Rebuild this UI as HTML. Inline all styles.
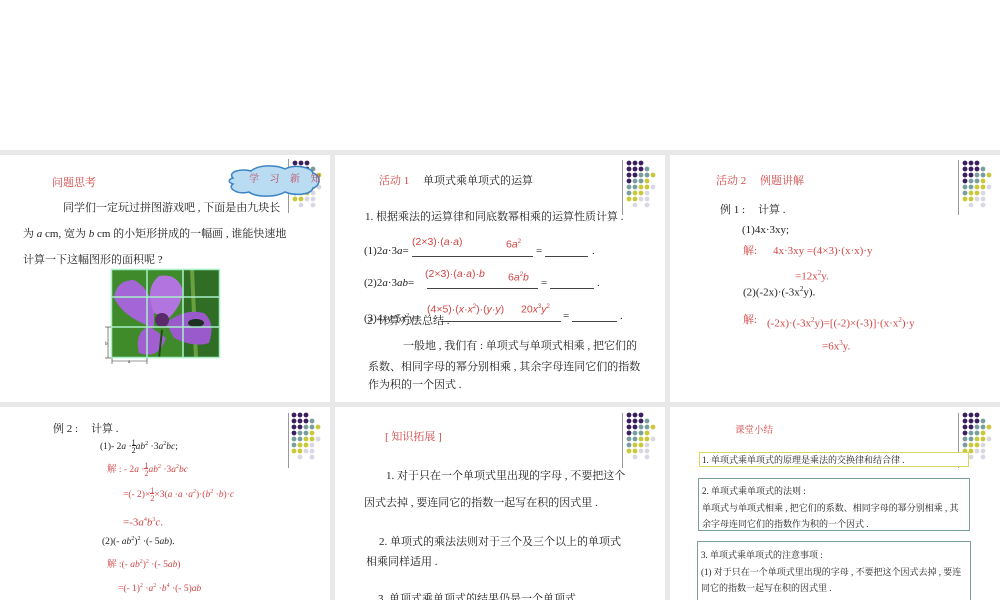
<!DOCTYPE html>
<html><head><meta charset="utf-8"><style>
html,body{margin:0;width:1000px;height:600px;overflow:hidden}
body{background:#fff;font-family:"Liberation Serif","Noto Serif CJK SC",serif;color:#222}
#w{position:relative;width:1000px;height:600px;overflow:hidden}
.bg{position:absolute;left:0;top:150px;width:1000px;height:450px;background:#e8e8e8}
.s{position:absolute;background:#fff}
.t{position:absolute;white-space:nowrap;font-size:11px;line-height:14px;transform:translateY(-7px)}
.r{color:#d24646}
.sm{font-size:9.5px}
.f{font-family:"Liberation Sans","Noto Sans CJK SC",sans-serif;font-size:10.5px}
.vl{position:absolute;width:1px;background:#999}
.ul{position:absolute;height:1px;background:#444}
.bx{position:absolute;border:1.5px solid #7a9ea0;background:#fff}
.b8{font-size:9px}
</style></head><body><div id="w">
<div class="bg"></div>
<div class="s" style="left:0;top:155px;width:330px;height:247px"></div>
<div class="s" style="left:335px;top:155px;width:330px;height:247px"></div>
<div class="s" style="left:670px;top:155px;width:330px;height:247px"></div>
<div class="s" style="left:0;top:407px;width:330px;height:193px"></div>
<div class="s" style="left:335px;top:407px;width:330px;height:193px"></div>
<div class="s" style="left:670px;top:407px;width:330px;height:193px"></div>

<svg width="0" height="0" style="position:absolute"><defs>
<g id="dots">
<g fill="#3b1f5e"><circle cx="0" cy="0" r="2.4"/><circle cx="6" cy="0" r="2.4"/><circle cx="12" cy="0" r="2.4"/>
<circle cx="0" cy="6" r="2.4"/><circle cx="6" cy="6" r="2.4"/><circle cx="12" cy="6" r="2.4"/>
<circle cx="0" cy="12" r="2.4"/><circle cx="6" cy="12" r="2.4"/><circle cx="0" cy="18" r="2.4"/></g>
<g fill="#7a9e9e"><circle cx="18" cy="6" r="2.4"/><circle cx="12" cy="12" r="2.4"/><circle cx="18" cy="12" r="2.4"/><circle cx="6" cy="18" r="2.4"/><circle cx="12" cy="18" r="2.4"/><circle cx="0" cy="24" r="2.4"/><circle cx="6" cy="24" r="2.4"/><circle cx="0" cy="30" r="2.4"/></g>
<g fill="#c8c83a"><circle cx="24" cy="12" r="2.4"/><circle cx="18" cy="18" r="2.4"/><circle cx="12" cy="24" r="2.4"/><circle cx="18" cy="24" r="2.4"/><circle cx="6" cy="30" r="2.4"/><circle cx="12" cy="30" r="2.4"/><circle cx="0" cy="36" r="2.4"/><circle cx="6" cy="36" r="2.4"/></g>
<g fill="#d8d8e4"><circle cx="24" cy="24" r="2.4"/><circle cx="18" cy="30" r="2.4"/><circle cx="12" cy="36" r="2.4"/><circle cx="18" cy="36" r="2.4"/><circle cx="6" cy="42" r="2.4"/><circle cx="18" cy="42" r="2.4"/></g>
</g></defs></svg>

<div class="vl" style="left:288px;top:159px;height:54px"></div>
<svg style="position:absolute;left:292px;top:160px" width="32" height="50"><use href="#dots" x="3" y="3"/></svg>
<div class="vl" style="left:622px;top:160px;height:55px"></div>
<svg style="position:absolute;left:626px;top:160px" width="32" height="50"><use href="#dots" x="3" y="3"/></svg>
<div class="vl" style="left:958px;top:160px;height:55px"></div>
<svg style="position:absolute;left:962px;top:160px" width="32" height="50"><use href="#dots" x="3" y="3"/></svg>
<div class="vl" style="left:288px;top:413px;height:55px"></div>
<svg style="position:absolute;left:291px;top:412px" width="32" height="50"><use href="#dots" x="3" y="3"/></svg>
<div class="vl" style="left:622px;top:413px;height:55px"></div>
<svg style="position:absolute;left:626px;top:412px" width="32" height="50"><use href="#dots" x="3" y="3"/></svg>
<div class="vl" style="left:958px;top:413px;height:55px"></div>
<svg style="position:absolute;left:962px;top:412px" width="32" height="50"><use href="#dots" x="3" y="3"/></svg>

<!-- slide 1 -->
<svg style="position:absolute;left:225px;top:162px" width="96" height="38">
<path d="M8 16 C2 10 16 6 26 9 C34 2 52 3 60 7 C70 2 86 5 88 11 C96 13 96 24 88 26 C86 33 70 34 60 30 C50 36 30 35 24 30 C12 33 2 26 8 22 C2 20 4 17 8 16Z" fill="#b9dcf2" stroke="#3b84c4" stroke-width="1.5"/>
</svg>
<div class="t" style="left:249px;top:180px;color:#c04860;font-size:10px;letter-spacing:4px">学 习 新 知</div>
<div class="t r" style="left:52px;top:183px">问题思考</div>
<div class="t" style="left:63px;top:208px">同学们一定玩过拼图游戏吧 , 下面是由九块长</div>
<div class="t" style="left:23px;top:234px">为 <i>a</i> cm, 宽为 <i>b</i> cm 的小矩形拼成的一幅画 , 谁能快速地</div>
<div class="t" style="left:23px;top:260px">计算一下这幅图形的面积呢 ?</div>
<svg style="position:absolute;left:104px;top:268px" width="118" height="96">
<rect x="7" y="1" width="109" height="89" fill="#3f8a2a"/>
<rect x="80" y="1" width="36" height="89" fill="#2f6e24"/>
<path d="M86 1 L90 90 L94 90 L90 1Z" fill="#6aa040"/>
<path d="M50 60 Q20 50 10 30 Q12 12 30 12 Q45 20 50 40Z" fill="#a465d6"/>
<path d="M50 45 Q40 20 55 8 Q72 5 78 20 Q80 35 65 50Z" fill="#b275e0"/>
<path d="M62 55 Q80 40 100 45 Q112 55 105 75 Q90 80 70 70Z" fill="#9a5acc"/>
<path d="M45 58 Q30 65 35 85 Q55 92 62 70Z" fill="#a060d0"/>
<circle cx="58" cy="52" r="7" fill="#5a2a6a"/>
<ellipse cx="92" cy="55" rx="8" ry="4" fill="#1e3020"/>
<path d="M58 62 L55 90" stroke="#234a1a" stroke-width="2"/>
<g stroke="#a8f0c8" stroke-width="1.5" fill="none"><rect x="7.5" y="1.5" width="108" height="88"/><line x1="43" y1="1" x2="43" y2="90"/><line x1="79" y1="1" x2="79" y2="90"/><line x1="7" y1="29" x2="116" y2="29"/><line x1="7" y1="59" x2="116" y2="59"/></g>
<g stroke="#333" stroke-width="0.6"><line x1="4" y1="59" x2="4" y2="90"/><line x1="1" y1="59" x2="7" y2="59"/><line x1="1" y1="90" x2="7" y2="90"/><line x1="8" y1="93" x2="43" y2="93"/><line x1="8" y1="90" x2="8" y2="96"/><line x1="43" y1="90" x2="43" y2="96"/></g>
<text x="1" y="77" font-size="5" fill="#333">b</text><text x="24" y="95" font-size="5" fill="#333">a</text>
</svg>

<!-- slide 2 -->
<div class="t r" style="left:379px;top:181px">活动 1</div>
<div class="t" style="left:423px;top:181px">单项式乘单项式的运算</div>
<div class="t" style="left:365px;top:217px">1. 根据乘法的运算律和同底数幂相乘的运算性质计算 .</div>
<div class="t r f" style="left:412px;top:242px">(2×3)·(<i>a</i>·<i>a</i>)</div>
<div class="t r f" style="left:506px;top:242px">6<i>a</i><sup style="font-size:6px">2</sup></div>
<div class="t" style="left:364px;top:251px">(1)2<i>a</i>·3<i>a</i>=</div>
<div class="ul" style="left:412px;top:256px;width:121px"></div>
<div class="t" style="left:536px;top:251px">=</div>
<div class="ul" style="left:545px;top:256px;width:43px"></div>
<div class="t" style="left:592px;top:251px">.</div>
<div class="t r f" style="left:425px;top:274px">(2×3)·(<i>a</i>·<i>a</i>)·<i>b</i></div>
<div class="t r f" style="left:508px;top:275px">6<i>a</i><sup style="font-size:6px">2</sup><i>b</i></div>
<div class="t" style="left:364px;top:283px">(2)2<i>a</i>·3<i>ab</i>=</div>
<div class="ul" style="left:427px;top:288px;width:111px"></div>
<div class="t" style="left:541px;top:283px">=</div>
<div class="ul" style="left:550px;top:288px;width:44px"></div>
<div class="t" style="left:597px;top:283px">.</div>
<div class="t r f" style="left:427px;top:307px">(4×5)·(<i>x</i>·<i>x</i><sup style="font-size:6px">2</sup>)·(<i>y</i>·<i>y</i>)</div>
<div class="t r f" style="left:521px;top:307px">20<i>x</i><sup style="font-size:6px">3</sup><i>y</i><sup style="font-size:6px">2</sup></div>
<div class="t" style="left:364px;top:316px">(3)4<i>xy</i>·5<i>x</i><sup style="font-size:6px">2</sup><i>y</i>=</div>
<div class="ul" style="left:441px;top:321px;width:120px"></div>
<div class="t" style="left:563px;top:316px">=</div>
<div class="ul" style="left:572px;top:321px;width:45px"></div>
<div class="t" style="left:620px;top:316px">.</div>
<div class="t" style="left:367px;top:321px">2. 计算方法总结 .</div>
<div class="t" style="left:403px;top:346px">一般地 , 我们有 : 单项式与单项式相乘 , 把它们的</div>
<div class="t" style="left:368px;top:367px">系数、相同字母的幂分别相乘 , 其余字母连同它们的指数</div>
<div class="t" style="left:368px;top:385px">作为积的一个因式 .</div>

<!-- slide 3 -->
<div class="t r" style="left:716px;top:181px">活动 2</div>
<div class="t r" style="left:760px;top:181px">例题讲解</div>
<div class="t" style="left:720px;top:210px">例 1 :</div>
<div class="t" style="left:758px;top:210px">计算 .</div>
<div class="t" style="left:742px;top:230px">(1)4x·3xy;</div>
<div class="t r" style="left:743px;top:251px">解:</div>
<div class="t r" style="left:773px;top:251px">4x·3xy =(4×3)·(x·x)·y</div>
<div class="t r" style="left:795px;top:273px">=12x<sup style="font-size:7px">2</sup>y.</div>
<div class="t" style="left:743px;top:289px">(2)(-2x)·(-3x<sup style="font-size:7px">2</sup>y).</div>
<div class="t r" style="left:743px;top:320px">解:</div>
<div class="t r" style="left:767px;top:320px">(-2x)·(-3x<sup style="font-size:7px">2</sup>y)=[(-2)×(-3)]·(x·x<sup style="font-size:7px">2</sup>)·y</div>
<div class="t r" style="left:822px;top:343px">=6x<sup style="font-size:7px">3</sup>y.</div>

<!-- slide 4 -->
<div class="t" style="left:53px;top:429px">例 2 :</div>
<div class="t" style="left:91px;top:429px">计算 .</div>
<div class="t sm" style="left:100px;top:444px">(1)- 2<i>a</i> ·<span style="display:inline-block;vertical-align:middle;text-align:center;font-size:8px;line-height:8px">1<br><span style="border-top:1px solid #222">2</span></span><i>ab</i><sup style="font-size:6px">2</sup> ·3<i>a</i><sup style="font-size:6px">2</sup><i>bc</i>;</div>
<div class="t r sm" style="left:107px;top:467px">解 : - 2<i>a</i> ·<span style="display:inline-block;vertical-align:middle;text-align:center;font-size:8px;line-height:8px">1<br><span style="border-top:1px solid #d24646">2</span></span><i>ab</i><sup style="font-size:6px">2</sup> ·3<i>a</i><sup style="font-size:6px">2</sup><i>bc</i></div>
<div class="t r sm" style="left:123px;top:492px">=(- 2)×<span style="display:inline-block;vertical-align:middle;text-align:center;font-size:8px;line-height:8px">1<br><span style="border-top:1px solid #d24646">2</span></span>×3(<i>a</i> ·<i>a</i> ·<i>a</i><sup style="font-size:6px">2</sup>)·(<i>b</i><sup style="font-size:6px">2</sup> ·<i>b</i>)·<i>c</i></div>
<div class="t r" style="left:123px;top:520px">=-3<i>a</i><sup style="font-size:6px">4</sup><i>b</i><sup style="font-size:6px">3</sup><i>c</i>.</div>
<div class="t sm" style="left:102px;top:539px">(2)(- <i>ab</i><sup style="font-size:6px">2</sup>)<sup style="font-size:6px">2</sup> ·(- 5<i>ab</i>).</div>
<div class="t r sm" style="left:107px;top:562px">解 :(- <i>ab</i><sup style="font-size:6px">2</sup>)<sup style="font-size:6px">2</sup> ·(- 5<i>ab</i>)</div>
<div class="t r sm" style="left:118px;top:586px">=(- 1)<sup style="font-size:6px">2</sup> ·<i>a</i><sup style="font-size:6px">2</sup> ·<i>b</i><sup style="font-size:6px">4</sup> ·(- 5)<i>ab</i></div>

<!-- slide 5 -->
<div class="t r" style="left:385px;top:437px">[ 知识拓展 ]</div>
<div class="t" style="left:386px;top:476px">1. 对于只在一个单项式里出现的字母 , 不要把这个</div>
<div class="t" style="left:364px;top:503px">因式去掉 , 要连同它的指数一起写在积的因式里 .</div>
<div class="t" style="left:379px;top:542px">2. 单项式的乘法法则对于三个及三个以上的单项式</div>
<div class="t" style="left:366px;top:562px">相乘同样适用 .</div>
<div class="t" style="left:378px;top:599px">3. 单项式乘单项式的结果仍是一个单项式 .</div>

<!-- slide 6 -->
<div class="t r" style="left:735px;top:431px;font-size:9.5px">课堂小结</div>
<div class="bx" style="left:699px;top:452px;width:268px;height:13px;border-color:#d8d860"></div>
<div class="t b8" style="left:702px;top:460px">1. 单项式乘单项式的原理是乘法的交换律和结合律 .</div>
<div class="bx" style="left:698px;top:478px;width:270px;height:51px"></div>
<div class="t b8" style="left:702px;top:491px">2. 单项式乘单项式的法则 :</div>
<div class="t b8" style="left:702px;top:508px">单项式与单项式相乘 , 把它们的系数、相同字母的幂分别相乘 , 其</div>
<div class="t b8" style="left:702px;top:524px">余字母连同它们的指数作为积的一个因式 .</div>
<div class="bx" style="left:697px;top:541px;width:272px;height:70px"></div>
<div class="t b8" style="left:701px;top:555px">3. 单项式乘单项式的注意事项 :</div>
<div class="t b8" style="left:701px;top:572px">(1) 对于只在一个单项式里出现的字母 , 不要把这个因式去掉 , 要连</div>
<div class="t b8" style="left:701px;top:588px">同它的指数一起写在积的因式里 .</div>
</div></body></html>
